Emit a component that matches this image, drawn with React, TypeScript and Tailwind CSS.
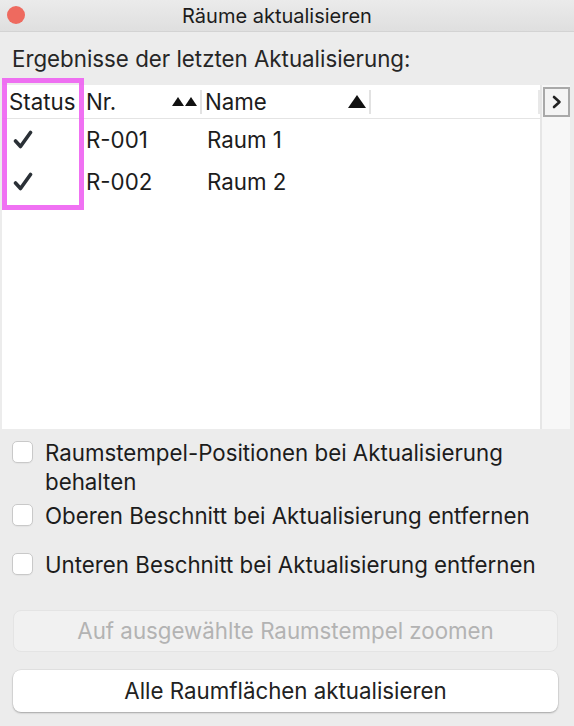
import React from "react";

function Check() {
  return (
    <svg width="22" height="20" viewBox="0 0 22 20">
      <path d="M3.5 11 L8.5 16.5 L18.5 2.5" fill="none" stroke="#2a3036" strokeWidth="3.6" strokeLinecap="round" strokeLinejoin="round" />
    </svg>
  );
}

function Checkbox() {
  return <div className="mt-[3px] w-[21px] h-[22px] shrink-0 rounded-[5px] border border-[#c9c9c9] bg-white shadow-[0_1px_1px_rgba(0,0,0,0.04)]" />;
}

export default function App() {
  const rows = [
    { nr: "R-001", name: "Raum 1" },
    { nr: "R-002", name: "Raum 2" },
  ];
  return (
    <div className="relative w-[574px] h-[726px] overflow-hidden bg-[#ececec] text-[#1c1c1c] font-['Inter',sans-serif] text-[22.3px]">
      {/* title bar */}
      <div className="relative h-[32px] flex items-center justify-center pr-[20px] border-b border-[#d3d3d3] bg-gradient-to-b from-[#ebebeb] to-[#dfdfdf]">
        <div className="absolute left-[7px] top-[6px] w-[18px] h-[18px] rounded-full bg-[#ee6a5f]" />
        <span className="text-[20px] leading-none">Räume aktualisieren</span>
      </div>
      <div className="h-[53px] flex items-center pl-[12px] text-[#262626]">Ergebnisse der letzten Aktualisierung:</div>

      {/* table */}
      <div className="ml-[2px] w-[568px] h-[344px] bg-white flex">
        <div className="w-[538px] flex flex-col">
          <div className="h-[34px] border-b border-[#e4e4e4] flex items-center">
            <div className="w-[80px] pl-[7px]">Status</div>
            <div className="w-[118px] flex items-center pl-[4px] pr-[2px]">
              <span className="flex-1">Nr.</span>
              <span className="flex gap-[1px] mr-[1px]">
                <svg width="12" height="9" viewBox="0 0 12 9"><path d="M0 9 L6 0 L12 9 Z" fill="#111" /></svg>
                <svg width="12" height="9" viewBox="0 0 12 9"><path d="M0 9 L6 0 L12 9 Z" fill="#111" /></svg>
              </span>
            </div>
            <div className="w-[2px] h-[24px] bg-[#e2e2e2]" />
            <div className="w-[167px] flex items-center pl-[3px] pr-[3px]">
              <span className="flex-1">Name</span>
              <svg width="18" height="13" viewBox="0 0 18 13"><path d="M0 13 L9 0 L18 13 Z" fill="#111" /></svg>
            </div>
            <div className="w-[2px] h-[24px] bg-[#e2e2e2]" />
            <div className="flex-1" />
            <div className="w-[2px] h-[24px] bg-[#e8e8e8]" />
          </div>
          {rows.map((r) => (
            <div key={r.nr} className="h-[42px] flex items-center">
              <div className="w-[80px] pl-[10px] flex items-center"><Check /></div>
              <div className="w-[120px] pl-[4px]">{r.nr}</div>
              <div className="pl-[5px]">{r.name}</div>
            </div>
          ))}
        </div>
        <div className="w-[30px] border-l-2 border-[#e6e6e6] bg-[#f7f7f7]">
          <div className="mt-[2px] ml-[1px] w-[27px] h-[30px] border-2 border-[#a9a9a9] bg-[#f4f4f4] flex items-center justify-center">
            <svg width="10" height="14" viewBox="0 0 10 14"><path d="M2 2 L7.5 7 L2 12" fill="none" stroke="#222" strokeWidth="2.6" strokeLinecap="round" strokeLinejoin="round" /></svg>
          </div>
        </div>
      </div>

      {/* options */}
      <div className="pl-[12px] pr-[10px] pt-[9px] flex flex-col">
        <div className="flex items-start gap-[12px] leading-[29px]">
          <Checkbox />
          <span>Raumstempel-Positionen bei Aktualisierung<br />behalten</span>
        </div>
        <div className="flex items-start gap-[12px] leading-[29px] mt-[5px]">
          <Checkbox />
          <span>Oberen Beschnitt bei Aktualisierung entfernen</span>
        </div>
        <div className="flex items-start gap-[12px] leading-[29px] mt-[20px]">
          <Checkbox />
          <span>Unteren Beschnitt bei Aktualisierung entfernen</span>
        </div>
      </div>

      {/* buttons */}
      <div className="px-[13px] pt-[31px] flex flex-col gap-[18px] w-[571px]">
        <div className="h-[42px] rounded-[8px] bg-[#f1f1f1] border border-[#e4e4e4] flex items-center justify-center text-[#b3b3b3]">Auf ausgewählte Raumstempel zoomen</div>
        <div className="h-[42px] rounded-[8px] bg-white shadow-[0_1px_2px_rgba(0,0,0,0.28),0_0_0_0.5px_rgba(0,0,0,0.08)] flex items-center justify-center text-[#222]">Alle Raumflächen aktualisieren</div>
      </div>

      {/* annotation */}
      <div className="absolute left-[2px] top-[78px] w-[82px] h-[132px] border-[5px] border-[#ee62f2] opacity-90" />
    </div>
  );
}
